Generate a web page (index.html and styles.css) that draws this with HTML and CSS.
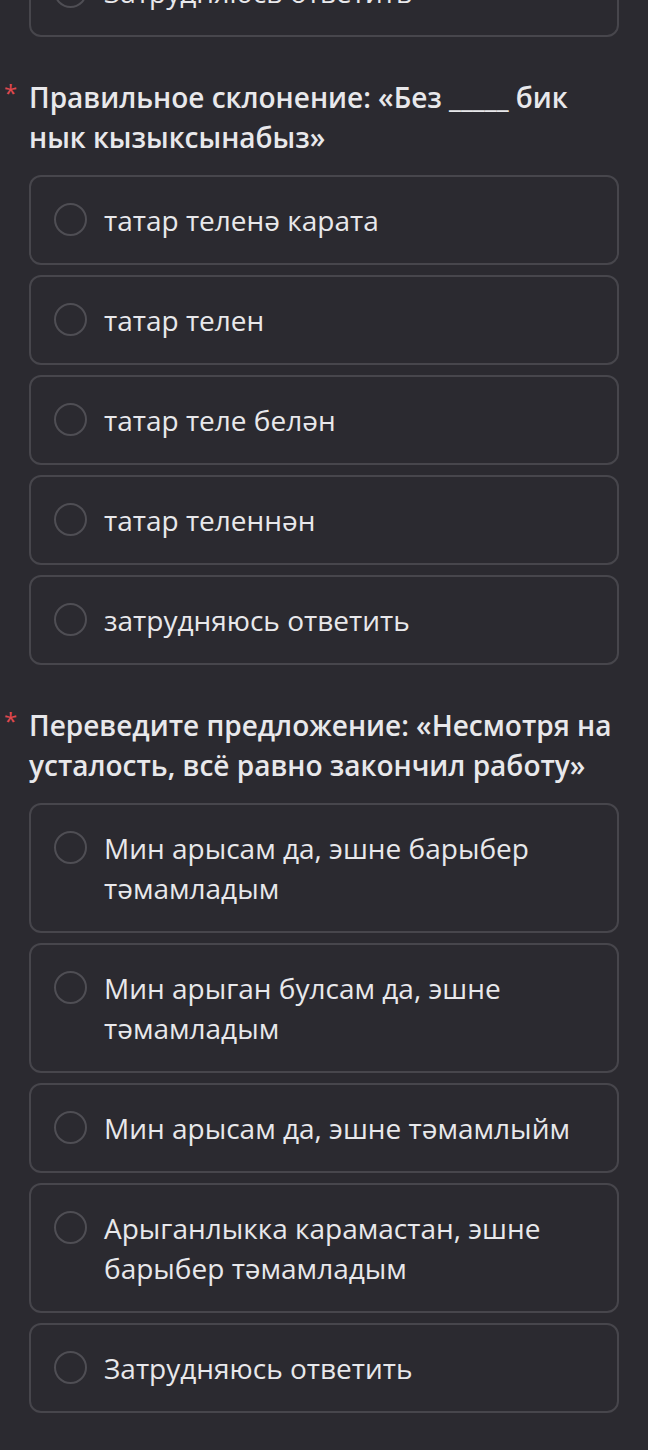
FILE: index.html
```html
<!DOCTYPE html>
<html lang="ru">

<head>
    <meta charset="UTF-8">
    <meta name="viewport" content="width=device-width, initial-scale=1.0">
    <title>Опрос</title>
    <link rel="stylesheet" href="styles.css">
</head>

<body>
    <div class="form">
        <div class="options">
            <label class="option">
                <span class="radio"></span>
                <span class="option-text">Затрудняюсь ответить</span>
            </label>
        </div>

        <div class="question">
            <div class="question-title">
                <span class="required">*</span>
                Правильное склонение: «Без _____ бик нык кызыксынабыз»
            </div>
            <div class="options">
                <label class="option">
                    <span class="radio"></span>
                    <span class="option-text">татар теленә карата</span>
                </label>
                <label class="option">
                    <span class="radio"></span>
                    <span class="option-text">татар телен</span>
                </label>
                <label class="option">
                    <span class="radio"></span>
                    <span class="option-text">татар теле белән</span>
                </label>
                <label class="option">
                    <span class="radio"></span>
                    <span class="option-text">татар теленнән</span>
                </label>
                <label class="option">
                    <span class="radio"></span>
                    <span class="option-text">затрудняюсь ответить</span>
                </label>
            </div>
        </div>

        <div class="question">
            <div class="question-title">
                <span class="required">*</span>
                Переведите предложение: «Несмотря на усталость, всё равно закончил работу»
            </div>
            <div class="options">
                <label class="option">
                    <span class="radio"></span>
                    <span class="option-text">Мин арысам да, эшне барыбер тәмамладым</span>
                </label>
                <label class="option">
                    <span class="radio"></span>
                    <span class="option-text">Мин арыган булсам да, эшне тәмамладым</span>
                </label>
                <label class="option">
                    <span class="radio"></span>
                    <span class="option-text">Мин арысам да, эшне тәмамлыйм</span>
                </label>
                <label class="option">
                    <span class="radio"></span>
                    <span class="option-text">Арыганлыкка карамастан, эшне барыбер тәмамладым</span>
                </label>
                <label class="option">
                    <span class="radio"></span>
                    <span class="option-text">Затрудняюсь ответить</span>
                </label>
            </div>
        </div>
    </div>
</body>

</html>
```

FILE: styles.css
```css
body {
    margin: 0;
    padding: 0;
    background-color: #2b2a30;
    color: #e8e8eb;
    font-family: "Open Sans", "Noto Sans", sans-serif;
}

.form {
    /* страница прокручена: верхняя карточка видна частично */
    margin-top: -53px;
    padding: 0 29px 37px;
}

.question {
    margin-top: 40px;
}

.question-title {
    position: relative;
    font-size: 28px;
    font-weight: 600;
    line-height: 40px;
    margin-bottom: 18px;
}

.required {
    position: absolute;
    left: -25px;
    top: -4px;
    color: #e0484e;
    font-size: 24px;
    font-weight: 400;
}

.options {
    display: flex;
    flex-direction: column;
    gap: 10px;
}

.option {
    display: flex;
    align-items: flex-start;
    gap: 17px;
    padding: 23px 20px 23px 23px;
    border: 2px solid #47464c;
    border-radius: 12px;
    cursor: pointer;
}

.radio {
    flex: none;
    width: 29px;
    height: 29px;
    margin-top: 3px;
    border: 2px solid #4f4e54;
    border-radius: 50%;
}

.option-text {
    font-size: 28px;
    line-height: 40px;
}
```
